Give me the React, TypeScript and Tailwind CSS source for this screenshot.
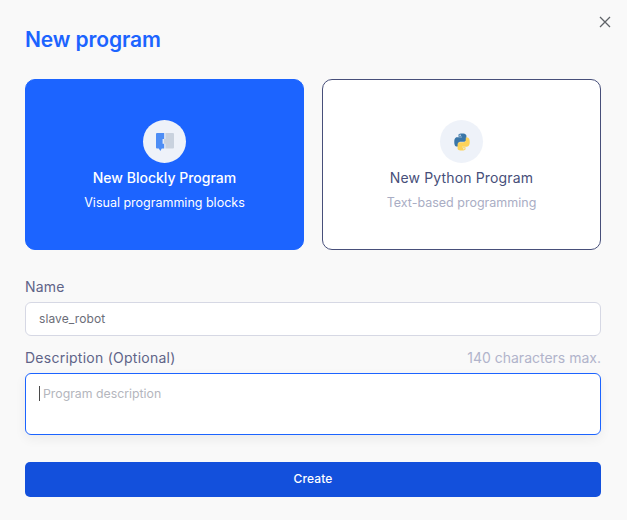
import React from "react";

function BlocklyIcon() {
  return (
    <svg width="18" height="18" viewBox="0 0 18 18">
      <path d="M0 1a1 1 0 0 1 1-1h7.200v6H6.600v4.800h1.600v4.700H5.800L4.300 18l-1.500-2.500H1a1 1 0 0 1-1-1z" fill="#4d8df5" />
      <path d="M9.400 0H17a1 1 0 0 1 1 1v13.500a1 1 0 0 1-1 1H9.400v-4.700H7.800V6h1.600z" fill="#c9d2de" />
    </svg>
  );
}

function PythonIcon() {
  return (
    <svg width="18" height="18" viewBox="0 0 20 20">
      <path d="M9.900.6C5.900.6 6.100 2.300 6.100 2.300v1.900h3.900v.6H4.500S1.400 4.500 1.400 9.900c0 5.300 2.700 5.100 2.700 5.100h1.700v-2.500s-.1-2.700 2.700-2.700h3.900s2.500 0 2.500-2.500V3.200S15.300.6 9.900.6z" fill="#3a76a8" />
      <circle cx="7.900" cy="2.600" r=".8" fill="#eef2f9" />
      <path d="M10.100 19.400c4 0 3.800-1.700 3.800-1.700v-1.900H10v-.6h5.500s3.100.3 3.100-5.100c0-5.300-2.700-5.100-2.700-5.100h-1.700v2.500s.1 2.700-2.700 2.700H7.600s-2.500 0-2.500 2.500v4.400s-.4 2.300 5 2.300z" fill="#fdd35a" />
      <circle cx="12.100" cy="17.400" r=".8" fill="#eef2f9" />
    </svg>
  );
}

export default function App() {
  return (
    <div className="relative h-[520px] w-[627px] overflow-hidden bg-[#f9f9f9] pl-[25px] pr-[26px] font-['Inter',sans-serif]">
      <button className="absolute right-[16px] top-[16px] text-[#5f6368]" aria-label="Close">
        <svg width="12" height="12" viewBox="0 0 12 12" fill="none" stroke="currentColor" strokeWidth="1.300">
          <path d="M1 1l10 10M11 1L1 11" />
        </svg>
      </button>

      <h1 className="pt-[27px] text-[21px] font-semibold leading-[26px] tracking-[-0.1px] text-[#1c64ff]">New program</h1>

      <div className="mt-[26px] flex gap-[18px]">
        <div className="flex h-[171px] w-[279px] flex-col items-center rounded-[10px] border border-[#1c64ff] bg-[#1c64ff] pt-[40px]">
          <div className="flex h-[43px] w-[43px] items-center justify-center rounded-full bg-[#eef2f9]">
            <BlocklyIcon />
          </div>
          <div className="mt-[3px] text-[14px] font-medium leading-[24px] text-white">New Blockly Program</div>
          <div className="mt-[2px] text-[12.500px] leading-[22px] text-white">Visual programming blocks</div>
        </div>
        <div className="flex h-[171px] w-[279px] flex-col items-center rounded-[10px] border border-[#474f7a] bg-white pt-[40px]">
          <div className="flex h-[43px] w-[43px] items-center justify-center rounded-full bg-[#eef2f9]">
            <PythonIcon />
          </div>
          <div className="mt-[3px] text-[14px] leading-[24px] tracking-[0.15px] text-[#474f7a]">New Python Program</div>
          <div className="mt-[2px] text-[12.500px] leading-[22px] text-[#a9adc4]">Text-based programming</div>
        </div>
      </div>

      <div className="mt-[28px] text-[14px] leading-[18px] tracking-[0.2px] text-[#5f6488]">Name</div>
      <div className="mt-[6px] flex h-[34px] items-center rounded-[6px] border border-[#d6d8e4] bg-white px-[13px] text-[12px] tracking-[0.1px] text-[#6b6d78]">
        slave_robot
      </div>

      <div className="mt-[13px] flex items-center justify-between text-[14px] leading-[18px]">
        <span className="tracking-[0.25px] text-[#5f6488]">Description (Optional)</span>
        <span className="text-[#b1b4cb]">140 characters max.</span>
      </div>
      <div className="mt-[6px] flex h-[62px] items-start rounded-[6px] border border-[#1c64ff] bg-white pl-[13px] pt-[12px] shadow-[0_4px_12px_rgba(0,0,0,0.06)]">
        <span className="h-[15px] w-px bg-[#4a4a4a]" />
        <span className="ml-[3px] text-[12.300px] leading-[15px] text-[#b4b6bd]">Program description</span>
      </div>

      <button className="mt-[27px] block h-[35px] w-full rounded-[5px] bg-[#1350dc] pb-[2px] text-[12px] font-medium tracking-[0.1px] text-white">
        Create
      </button>
    </div>
  );
}
